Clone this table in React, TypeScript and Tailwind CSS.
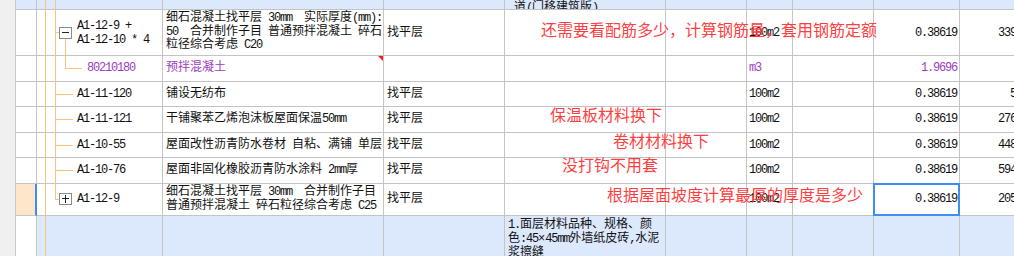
import React from 'react'

const cols = 'grid grid-cols-[21px_126px_221px_121px_161px_81px_46px_81px_86px_84px]'
const cell = 'relative flex border-r border-b border-[#c4c4c4]'

function Txt({ s }: { s: string }) {
  const parts = s.split(/([\x20-\x7e]+)/).filter(Boolean)
  return (
    <>
      {parts.map((p, i) =>
        /^[\x20-\x7e]+$/.test(p) ? (
          <span key={i} className="tracking-[-1.2px]">{p}</span>
        ) : (
          <span key={i}>{p}</span>
        )
      )}
    </>
  )
}

function Guides({ second = true }: { second?: boolean }) {
  return (
    <>
      <span className="absolute left-[8px] top-0 bottom-[-1px] w-px bg-[#f8c47c]" />
      {second && <span className="absolute left-[18px] top-0 bottom-[-1px] w-px bg-[#f8c47c]" />}
    </>
  )
}

function Box({ open }: { open: boolean }) {
  return (
    <span className="relative w-[13px] h-[12px] shrink-0 border border-[#8a8a8a] bg-white">
      <span className="absolute left-[2px] right-[2px] top-[4px] h-px bg-[#222]" />
      {!open && <span className="absolute top-[1px] bottom-[1px] left-[5px] w-px bg-[#222]" />}
    </span>
  )
}

type RowProps = {
  h: string
  tree: React.ReactNode
  desc: string[]
  descLeading?: string
  layer?: string
  unit: string
  qty: string
  total: string
  purple?: boolean
  flag?: boolean
  current?: boolean
}

function DataRow({ h, tree, desc, descLeading = 'leading-[14px]', layer = '找平层', unit, qty, total, purple, flag, current }: RowProps) {
  const tone = purple ? 'text-[#a03cc0]' : 'text-[#111]'
  return (
    <div className={`${cols} ${h}`}>
      <div className={`${cell} ${current ? 'bg-[#fde6c9] border-r-2 border-r-[#3b8eea]' : ''}`} />
      <div className={`${cell} items-center`}>{tree}</div>
      <div className={`${cell} items-center overflow-hidden pl-[3px] ${tone} ${descLeading}`}>
        <div className="flex flex-col">
          {desc.map((d) => (
            <div key={d} className="whitespace-pre">
              <Txt s={d} />
            </div>
          ))}
        </div>
        {flag && (
          <svg className="absolute top-0 right-0" width="5" height="5" viewBox="0 0 5 5">
            <polygon points="0,0 5,0 5,5" fill="#ff1a1a" />
          </svg>
        )}
      </div>
      <div className={`${cell} items-center pl-[3px]`}>{purple ? '' : layer}</div>
      <div className={cell} />
      <div className={cell} />
      <div className={`${cell} items-center pl-[2px] ${tone}`}>
        <Txt s={unit} />
      </div>
      <div className={cell} />
      <div className={`${cell} items-center justify-end pr-[2px] ${tone}`}>
        <Txt s={qty} />
        {current && (
          <span className="absolute left-[-1px] top-[-1px] right-[-1px] bottom-[-1px] border-2 border-[#3f8ff0]" />
        )}
      </div>
      <div className={`${cell} items-center justify-end pr-[3px]`}>
        <Txt s={total} />
      </div>
    </div>
  )
}

function Leaf({ code }: { code: string }) {
  return (
    <div className="relative flex items-center self-stretch w-full pl-[40px]">
      <Guides />
      <span className="absolute left-[18px] top-[12px] w-[18px] h-px bg-[#f8c47c]" />
      <Txt s={code} />
    </div>
  )
}

export default function App() {
  return (
    <div className="relative flex w-[1014px] h-[256px] overflow-hidden bg-white text-[12px] leading-[14px] text-[#111] font-['Liberation_Mono','Noto_Sans_CJK_SC',monospace]">
      <div className="w-[16px] shrink-0 bg-[#f0f0f0] border-r border-[#c8c8c8]" />

      <div className="flex flex-col shrink-0">
        {/* header, scrolled mostly out of view */}
        <div className={`${cols} h-[10px]`}>
          <div className={`${cell} bg-[#dce8fb]`} />
          <div className={`${cell} bg-[#dce8fb]`}>
            <Guides />
          </div>
          <div className={`${cell} bg-[#dce8fb]`} />
          <div className={`${cell} bg-[#dce8fb]`} />
          <div className={`${cell} bg-[#dce8fb] items-end overflow-hidden pl-[9px] leading-[12px]`}>
            <span className="whitespace-pre translate-y-[5px]">
              <Txt s="道(门移建筑版)" />
            </span>
          </div>
          <div className={`${cell} bg-[#dce8fb]`} />
          <div className={`${cell} bg-[#dce8fb]`} />
          <div className={`${cell} bg-[#dce8fb]`} />
          <div className={`${cell} bg-[#dce8fb]`} />
          <div className={`${cell} bg-[#dce8fb]`} />
        </div>

        <DataRow
          h="h-[47px]"
          descLeading="leading-[13.5px]"
          tree={
            <div className="relative flex items-center gap-[5px] self-stretch w-full pl-[22px]">
              <Guides />
              <span className="absolute left-[18px] top-[22px] w-[4px] h-px bg-[#f8c47c]" />
              <span className="absolute left-[28px] top-[29px] bottom-[-1px] w-px bg-[#f8c47c]" />
              <Box open />
              <div className="flex flex-col whitespace-pre">
                <Txt s="A1-12-9 +" />
                <Txt s="A1-12-10 * 4" />
              </div>
            </div>
          }
          desc={['细石混凝土找平层 30mm  实际厚度(mm):', '50  合并制作子目 普通预拌混凝土 碎石', '粒径综合考虑 C20']}
          unit="100m2"
          qty="0.38619"
          total="3392.83"
        />
        <DataRow
          h="h-[26px]"
          purple
          flag
          tree={
            <div className="relative flex items-center self-stretch w-full pl-[50px] text-[#a03cc0]">
              <Guides />
              <span className="absolute left-[28px] top-0 h-[12px] w-px bg-[#f8c47c]" />
              <span className="absolute left-[28px] top-[12px] w-[17px] h-px bg-[#f8c47c]" />
              <Txt s="80210180" />
            </div>
          }
          desc={['预拌混凝土']}
          unit="m3"
          qty="1.9696"
          total=""
        />
        <DataRow h="h-[26px]" tree={<Leaf code="A1-11-120" />} desc={['铺设无纺布']} unit="100m2" qty="0.38619" total="57.26" />
        <DataRow h="h-[26px]" tree={<Leaf code="A1-11-121" />} desc={['干铺聚苯乙烯泡沫板屋面保温50mm']} unit="100m2" qty="0.38619" total="2764.45" />
        <DataRow h="h-[26px]" tree={<Leaf code="A1-10-55" />} desc={['屋面改性沥青防水卷材 自粘、满铺 单层']} unit="100m2" qty="0.38619" total="4483.28" />
        <DataRow h="h-[26px]" tree={<Leaf code="A1-10-76" />} desc={['屋面非固化橡胶沥青防水涂料 2mm厚']} unit="100m2" qty="0.38619" total="5942.16" />
        <DataRow
          h="h-[33px]"
          current
          tree={
            <div className="relative flex items-center gap-[5px] self-stretch w-full pl-[22px]">
              <Guides second={false} />
              <span className="absolute left-[18px] top-0 h-[16px] w-px bg-[#f8c47c]" />
              <span className="absolute left-[18px] top-[15px] w-[4px] h-px bg-[#f8c47c]" />
              <Box open={false} />
              <Txt s="A1-12-9" />
            </div>
          }
          desc={['细石混凝土找平层 30mm  合并制作子目', '普通预拌混凝土 碎石粒径综合考虑 C25']}
          unit="100m2"
          qty="0.38619"
          total="2051.69"
        />

        {/* next bill item, partly visible */}
        <div className={`${cols} h-[40px]`}>
          <div className={cell} />
          <div className={`${cell} bg-[#dce8fb]`}>
            <Guides second={false} />
          </div>
          <div className={`${cell} bg-[#dce8fb]`} />
          <div className={`${cell} bg-[#dce8fb]`} />
          <div className={`${cell} bg-[#dce8fb] flex-col pl-[3px] pt-[2px] leading-[14px]`}>
            <div className="whitespace-pre"><Txt s="1.面层材料品种、规格、颜" /></div>
            <div className="whitespace-pre"><Txt s="色:45×45mm外墙纸皮砖,水泥" /></div>
            <div className="whitespace-pre"><Txt s="浆擦缝" /></div>
          </div>
          <div className={`${cell} bg-[#dce8fb]`} />
          <div className={`${cell} bg-[#dce8fb]`} />
          <div className={`${cell} bg-[#dce8fb]`} />
          <div className={`${cell} bg-[#dce8fb]`} />
          <div className={`${cell} bg-[#dce8fb]`} />
        </div>
      </div>

      {/* red review notes typed over the sheet */}
      <div className="absolute left-[541px] top-[21px] whitespace-nowrap text-[16px] leading-[16px] text-[#ff3f3f] font-['Noto_Sans_CJK_SC',sans-serif]">
        还需要看配筋多少，计算钢筋量，套用钢筋定额
      </div>
      <div className="absolute left-[550px] top-[106px] whitespace-nowrap text-[16px] leading-[16px] text-[#ff3f3f] font-['Noto_Sans_CJK_SC',sans-serif]">
        保温板材料换下
      </div>
      <div className="absolute left-[613px] top-[132px] whitespace-nowrap text-[16px] leading-[16px] text-[#ff3f3f] font-['Noto_Sans_CJK_SC',sans-serif]">
        卷材材料换下
      </div>
      <div className="absolute left-[562px] top-[156px] whitespace-nowrap text-[16px] leading-[16px] text-[#ff3f3f] font-['Noto_Sans_CJK_SC',sans-serif]">
        没打钩不用套
      </div>
      <div className="absolute left-[607px] top-[186px] whitespace-nowrap text-[16px] leading-[16px] text-[#ff3f3f] font-['Noto_Sans_CJK_SC',sans-serif]">
        根据屋面坡度计算最厚的厚度是多少
      </div>
    </div>
  )
}
